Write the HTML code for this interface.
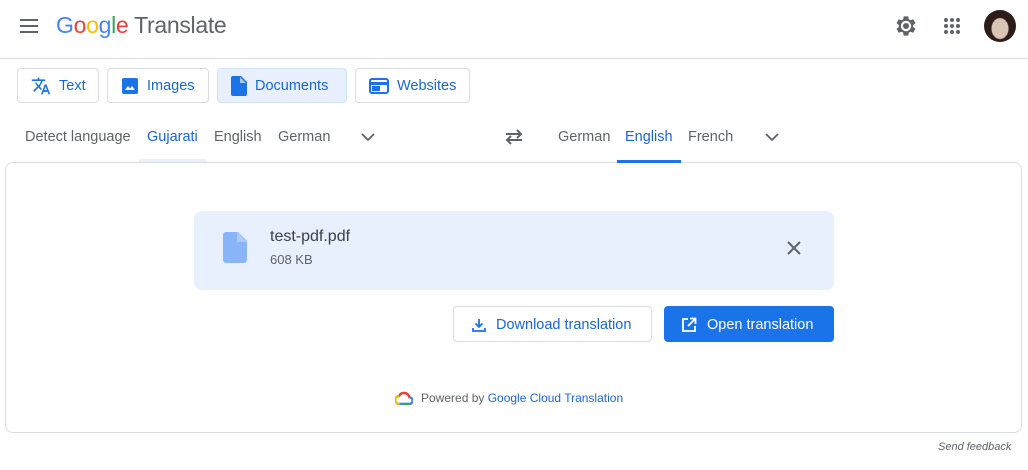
<!DOCTYPE html><html><head><style>
*{margin:0;padding:0;box-sizing:border-box}
body{width:1028px;height:470px;background:#fff;font-family:"Liberation Sans",Arial,sans-serif;position:relative;overflow:hidden;color:#3c4043}
.a{position:absolute}
.btn{position:absolute;top:68px;height:35px;border:1px solid #dadce0;border-radius:4px;display:flex;align-items:center;padding-left:13px;padding-top:1px;color:#1967d2;font-size:14.5px;background:#fff}
.btn svg{margin-right:8px}
.t{position:absolute;top:129px;font-size:14.5px;color:#5f6368}
</style></head><body>
<svg class="a" style="left:19px;top:17px" width="20" height="18" viewBox="0 0 20 18"><path d="M1 3h18M1 9h18M1 15h18" stroke="#5f6368" stroke-width="2"/></svg>
<div class="a" style="left:56px;top:12px;font-size:23px;letter-spacing:-0.3px"><span style="color:#4285f4">G</span><span style="color:#ea4335">o</span><span style="color:#fbbc05">o</span><span style="color:#4285f4">g</span><span style="color:#34a853">l</span><span style="color:#ea4335">e</span> <span style="color:#5f6368">Translate</span></div>
<svg class="a" style="left:894px;top:14px" width="24" height="24" viewBox="0 0 24 24"><path fill="#5f6368" fill-rule="evenodd" d="M19.14 12.94c.04-.3.06-.61.06-.94 0-.32-.02-.64-.07-.94l2.03-1.58c.18-.14.23-.41.12-.61l-1.92-3.32c-.12-.22-.37-.29-.59-.22l-2.39.96c-.5-.38-1.03-.7-1.62-.94l-.36-2.54c-.04-.24-.24-.41-.48-.41h-3.84c-.24 0-.43.17-.47.41l-.36 2.54c-.59.24-1.13.57-1.62.94l-2.39-.96c-.22-.08-.47 0-.59.22L2.74 8.87c-.12.21-.08.47.12.61l2.03 1.58c-.05.3-.09.63-.09.94s.02.64.07.94l-2.03 1.58c-.18.14-.23.41-.12.61l1.920 3.32c.12.22.37.29.59.22l2.39-.96c.5.38 1.03.7 1.62.94l.36 2.54c.05.24.24.41.48.41h3.84c.24 0 .44-.17.47-.41l.36-2.54c.59-.24 1.130-.56 1.62-.94l2.39.96c.22.08.47 0 .59-.22l1.92-3.32c.12-.22.07-.47-.12-.61l-2.01-1.58zM12 17.2a5.2 5.2 0 110-10.4 5.2 5.2 0 010 10.4z"/><circle cx="12" cy="12" r="3" fill="#5f6368"/></svg>
<svg class="a" style="left:943px;top:17px" width="18" height="18"><g fill="#5f6368"><circle cx="3" cy="3" r="2"/><circle cx="9" cy="3" r="2"/><circle cx="15" cy="3" r="2"/><circle cx="3" cy="9" r="2"/><circle cx="9" cy="9" r="2"/><circle cx="15" cy="9" r="2"/><circle cx="3" cy="15" r="2"/><circle cx="9" cy="15" r="2"/><circle cx="15" cy="15" r="2"/></g></svg>
<div class="a" style="left:984px;top:10px;width:32px;height:32px;border-radius:50%;background:radial-gradient(ellipse 9px 11px at 50% 58%,#d9c4b6 0 90%,#2e1c18 100%)"></div>
<div class="a" style="left:0;top:58px;width:1028px;height:1px;background:#dadce0"></div>
<div class="btn" style="left:17px;width:82px"><svg width="20" height="20" viewBox="0 0 24 24"><path fill="#1a73e8" d="M12.9 15.1l-2.5-2.5v0A17 17 0 0014 6h3V4h-7V2H8v2H1v2h11.2A15.7 15.7 0 019 11.3 15.6 15.6 0 016.7 8h-2a17.6 17.6 0 003 4.6l-5.1 5L4 19l5-5 3.1 3.1.8-2zM18.5 10h-2L12 22h2l1.1-3h4.8l1.1 3h2l-4.5-12zm-2.6 7l1.6-4.3 1.6 4.3h-3.2z"/></svg>Text</div>
<div class="btn" style="left:107px;width:102px"><svg width="18" height="18" viewBox="0 0 18 18"><rect x="1" y="1" width="16" height="16" rx="2" fill="#1a73e8"/><path d="M4 13l3-4 2 2.5 2-2.5 3 4z" fill="#fff"/></svg>Images</div>
<div class="btn" style="left:217px;width:130px;background:#e8f0fe;border-color:#d2e3fc"><svg width="16" height="20" viewBox="0 0 16 20"><path d="M2 0h8l6 6v12a2 2 0 01-2 2H2a2 2 0 01-2-2V2a2 2 0 012-2z" fill="#1a73e8"/><path d="M9 1v6h6" fill="#fff" opacity=".6"/></svg>Documents</div>
<div class="btn" style="left:355px;width:115px"><svg width="20" height="16" viewBox="0 0 20 16"><rect x="1" y="1" width="18" height="14" rx="2" fill="none" stroke="#1a73e8" stroke-width="2"/><rect x="1" y="4" width="18" height="3" fill="#1a73e8"/><rect x="3" y="8" width="8" height="5" fill="#1a73e8"/></svg>Websites</div>
<div class="t" style="left:25px">Detect language</div>
<div class="t" style="left:147px;color:#1967d2">Gujarati</div>
<div class="t" style="left:214px">English</div>
<div class="t" style="left:278px">German</div>
<div class="a" style="left:139px;top:159px;width:67px;height:3px;background:#e8f0fe"></div>
<svg class="a" style="left:361px;top:132px" width="14" height="10"><path d="M1 2l6 6 6-6" stroke="#5f6368" stroke-width="1.8" fill="none"/></svg>
<svg class="a" style="left:503px;top:129px" width="22" height="16" viewBox="0 0 22 16"><path d="M3 5h15M14 1l4 4-4 4M19 11H4M8 7l-4 4 4 4" stroke="#5f6368" stroke-width="2" fill="none"/></svg>
<div class="t" style="left:558px">German</div>
<div class="t" style="left:625px;color:#1967d2">English</div>
<div class="t" style="left:688px">French</div>
<svg class="a" style="left:765px;top:132px" width="14" height="10"><path d="M1 2l6 6 6-6" stroke="#5f6368" stroke-width="1.8" fill="none"/></svg>
<div class="a" style="left:5px;top:162px;width:1017px;height:271px;border:1px solid #dadce0;border-radius:8px"></div>
<div class="a" style="left:617px;top:160px;width:64px;height:3px;background:#1a73e8"></div>
<div class="a" style="left:194px;top:211px;width:640px;height:79px;background:#e8f0fe;border-radius:8px"></div>
<svg class="a" style="left:223px;top:232px" width="24" height="31" viewBox="0 0 24 31"><path d="M3 0h12l9 9v19a3 3 0 01-3 3H3a3 3 0 01-3-3V3a3 3 0 013-3z" fill="#8ab4f8"/><path d="M14 0v10h10z" fill="#aecbfa"/></svg>
<div class="a" style="left:270px;top:228px;font-size:16px;color:#3c4043">test-pdf.pdf</div>
<div class="a" style="left:270px;top:252px;font-size:13px;color:#5f6368">608 KB</div>
<svg class="a" style="left:786px;top:240px" width="16" height="16"><path d="M2 2l12 12M14 2L2 14" stroke="#5f6368" stroke-width="2"/></svg>
<div class="a" style="left:453px;top:306px;width:199px;height:36px;border:1px solid #dadce0;border-radius:4px;display:flex;align-items:center;padding-left:18px;padding-top:1px;color:#1967d2;font-size:14.5px"><svg width="14" height="14" style="margin-right:10px"><path d="M7 1v8M3.5 5.5L7 9l3.5-3.5M1 10v3h12v-3" stroke="#1a73e8" stroke-width="1.8" fill="none"/></svg>Download translation</div>
<div class="a" style="left:664px;top:306px;width:170px;height:36px;background:#1a73e8;border-radius:4px;display:flex;align-items:center;padding-left:17px;padding-top:1px;color:#fff;font-size:14.5px"><svg width="16" height="16" style="margin-right:10px"><path d="M7 2H2v12h12V9M9 1.5h5.5V7M14.5 1.5L7 9" stroke="#fff" stroke-width="1.8" fill="none"/></svg>Open translation</div>
<svg class="a" style="left:395px;top:391px" width="18" height="14" viewBox="0 0 18 14"><path d="M4.5 13a4 4 0 01-.5-8 5.5 5.5 0 0110.3 1.2A3.4 3.4 0 0114 13z" fill="none" stroke="#4285f4" stroke-width="2.4"/><path d="M4 5a5.5 5.5 0 0110.3 1.2" fill="none" stroke="#ea4335" stroke-width="2.4"/><path d="M14 13H9" stroke="#34a853" stroke-width="2.4"/><path d="M4.5 13a4 4 0 01-.5-8" fill="none" stroke="#fbbc05" stroke-width="2.4"/></svg>
<div class="a" style="left:421px;top:391px;font-size:12px;color:#5f6368">Powered by <span style="color:#1967d2">Google Cloud Translation</span></div>
<div class="a" style="left:938px;top:441px;font-size:11px;font-style:italic;color:#5f6368">Send feedback</div>
</body></html>
